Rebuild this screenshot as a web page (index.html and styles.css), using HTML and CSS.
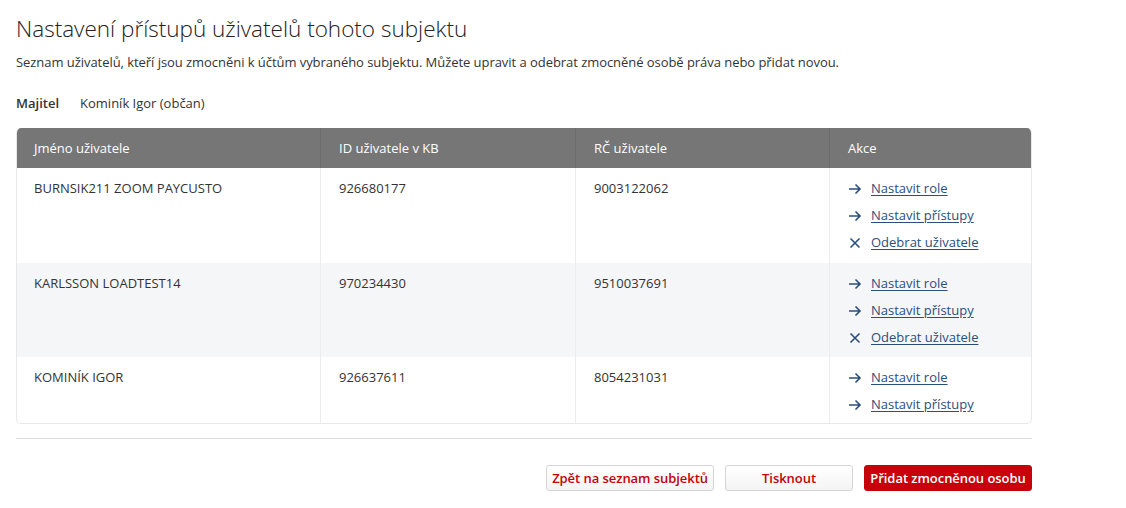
FILE: index.html
```html
<!DOCTYPE html>
<html>
	<head>
		<meta charset="UTF-8">
		<title>Nastavení přístupů</title>
		<link rel="stylesheet" href="styles.css">
	</head>
	<body>
		<div class="page">
			<h1 class="title">Nastavení přístupů uživatelů tohoto subjektu</h1>
			<p class="intro">Seznam uživatelů, kteří jsou zmocněni k účtům vybraného subjektu. Můžete upravit a odebrat zmocněné osobě práva nebo přidat novou.</p>

			<div class="owner">
				<span class="owner-label">Majitel</span>
				<span>Kominík Igor (občan)</span>
			</div>

			<table class="users">
				<thead>
					<tr>
						<th class="c1">Jméno uživatele</th>
						<th class="c2">ID uživatele v KB</th>
						<th class="c3">RČ uživatele</th>
						<th class="c4">Akce</th>
					</tr>
				</thead>
				<tbody>
					<tr>
						<td>BURNSIK211 ZOOM PAYCUSTO</td>
						<td>926680177</td>
						<td>9003122062</td>
						<td>
							<a class="act" href="#"><svg viewBox="0 0 14 14"><path d="M1 7h11M7.5 2.5 12 7l-4.5 4.5"/></svg><span>Nastavit role</span></a>
							<a class="act" href="#"><svg viewBox="0 0 14 14"><path d="M1 7h11M7.5 2.5 12 7l-4.5 4.5"/></svg><span>Nastavit přístupy</span></a>
							<a class="act" href="#"><svg viewBox="0 0 14 14"><path d="M2.5 2.5l9 9M11.5 2.5l-9 9"/></svg><span>Odebrat uživatele</span></a>
						</td>
					</tr>
					<tr class="alt">
						<td>KARLSSON LOADTEST14</td>
						<td>970234430</td>
						<td>9510037691</td>
						<td>
							<a class="act" href="#"><svg viewBox="0 0 14 14"><path d="M1 7h11M7.5 2.5 12 7l-4.5 4.5"/></svg><span>Nastavit role</span></a>
							<a class="act" href="#"><svg viewBox="0 0 14 14"><path d="M1 7h11M7.5 2.5 12 7l-4.5 4.5"/></svg><span>Nastavit přístupy</span></a>
							<a class="act" href="#"><svg viewBox="0 0 14 14"><path d="M2.5 2.5l9 9M11.5 2.5l-9 9"/></svg><span>Odebrat uživatele</span></a>
						</td>
					</tr>
					<tr>
						<td>KOMINÍK IGOR</td>
						<td>926637611</td>
						<td>8054231031</td>
						<td>
							<a class="act" href="#"><svg viewBox="0 0 14 14"><path d="M1 7h11M7.5 2.5 12 7l-4.5 4.5"/></svg><span>Nastavit role</span></a>
							<a class="act" href="#"><svg viewBox="0 0 14 14"><path d="M1 7h11M7.5 2.5 12 7l-4.5 4.5"/></svg><span>Nastavit přístupy</span></a>
						</td>
					</tr>
				</tbody>
			</table>

			<div class="footer">
				<button class="btn">Zpět na seznam subjektů</button>
				<button class="btn wide">Tisknout</button>
				<button class="btn primary">Přidat zmocněnou osobu</button>
			</div>
		</div>
	</body>
</html>
```

FILE: styles.css
```css
*{
	margin: 0;
	padding: 0;
	box-sizing: border-box;
}
body{
	font-family: "Open Sans", "Liberation Sans", sans-serif;
	font-size: 13px;
	color: #333;
	background: #fff;
}
.page{
	width: 1016px;
	margin-left: 16px;
	padding-top: 12px;
}
.title{
	font-size: 22.5px;
	font-weight: 300;
	line-height: 34px;
	color: #222;
}
.intro{
	margin-top: 6px;
	line-height: 20px;
	letter-spacing: -0.05px;
}
.owner{
	display: flex;
	gap: 21px;
	margin-top: 21px;
	line-height: 20px;
}
.owner-label{
	font-weight: 600;
}
.users{
	width: 100%;
	margin-top: 15px;
	border-collapse: separate;
	border-spacing: 0;
	border: 1px solid #e8e8e8;
	border-top: none;
	border-radius: 5px;
	overflow: hidden;
}
.users th{
	background-color: #767676;
	color: #fff;
	font-weight: 400;
	font-size: 13px;
	text-align: left;
	height: 40px;
	padding: 0 18px;
	border-left: 1px solid #6c6c6c;
}
.users th:first-child,
.users td:first-child{
	border-left: none;
}
.c1{ width: 303px; }
.c2{ width: 255px; }
.c3{ width: 254px; }
.users td{
	vertical-align: top;
	padding: 7px 18px 7px;
	line-height: 27px;
	border-left: 1px solid #ececec;
}
.users .alt td{
	padding-bottom: 6px;
}
.users tr:last-child td{
	padding-bottom: 5px;
}
.users td:first-child,
.users th:first-child{
	padding-left: 17px;
}
.users .alt td{
	background-color: #f5f6f8;
}
.act{
	display: flex;
	align-items: center;
	gap: 9px;
	height: 27px;
	color: #2b4e7c;
	text-decoration: underline;
	text-underline-offset: 2px;
}
.act svg{
	width: 14px;
	height: 14px;
	fill: none;
	stroke: #2b4e7c;
	stroke-width: 1.6;
}
.footer{
	margin-top: 14px;
	border-top: 1px solid #ddd;
	padding-top: 26px;
	display: flex;
	justify-content: flex-end;
	gap: 11px;
}
.btn{
	height: 26px;
	padding: 0 5px;
	font-family: inherit;
	font-size: 13px;
	font-weight: 600;
	letter-spacing: -0.05px;
	white-space: nowrap;
	color: #c4000b;
	background: linear-gradient(#fff, #f4f4f4);
	border: 1px solid #d4d4d4;
	border-radius: 3px;
	cursor: pointer;
}
.btn.wide{
	width: 128px;
}
.btn.primary{
	background: #c8000b;
	border-color: #c8000b;
	color: #fff;
	width: 168px;
	padding: 0;
}
```
